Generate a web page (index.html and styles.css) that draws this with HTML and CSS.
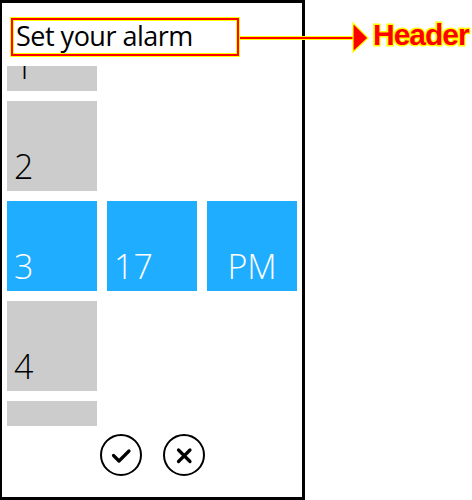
FILE: index.html
```html
<!DOCTYPE html>
<html>
<head>
<meta charset="utf-8">
<link rel="stylesheet" href="styles.css">
</head>
<body>
<div class="page">
  <div class="phone">
    <div class="header">Set your alarm</div>
    <div class="picker">
      <div class="col scroll-hours">
        <div class="tile gray"><span>1</span></div>
        <div class="tile gray"><span>2</span></div>
        <div class="tile blue"><span>3</span></div>
        <div class="tile gray"><span>4</span></div>
        <div class="tile gray"></div>
      </div>
      <div class="col scroll-selected">
        <div class="tile blue"><span>17</span></div>
      </div>
      <div class="col scroll-selected">
        <div class="tile blue center"><span>PM</span></div>
      </div>
    </div>
    <div class="actions">
      <svg class="btn" viewBox="0 0 42 42" width="42" height="42">
        <circle cx="21" cy="21" r="20" fill="none" stroke="#000" stroke-width="2"/>
        <path d="M13.5 21.5 L19 27 L29 17" fill="none" stroke="#000" stroke-width="3.2" stroke-linecap="round" stroke-linejoin="round"/>
      </svg>
      <svg class="btn" viewBox="0 0 42 42" width="42" height="42">
        <circle cx="21" cy="21" r="20" fill="none" stroke="#000" stroke-width="2"/>
        <path d="M15.5 16 L27 27.5 M27 16 L15.5 27.5" fill="none" stroke="#000" stroke-width="3.2" stroke-linecap="round"/>
      </svg>
    </div>
  </div>
  <svg class="arrow" width="140" height="40" viewBox="0 0 140 40">
    <line x1="0" y1="20" x2="118" y2="20" stroke="#ffff00" stroke-width="4"/>
    <line x1="0" y1="20" x2="118" y2="20" stroke="#ff0000" stroke-width="2"/>
    <polygon points="113,5 128,20 113,34" fill="#ff0000" stroke="#ffff00" stroke-width="1.2"/>
  </svg>
  <div class="label">Header</div>
</div>
</body>
</html>
```
FILE: styles.css
```css
html, body {
  margin: 0;
  padding: 0;
  background: #ffffff;
}
.page {
  position: relative;
  width: 472px;
  height: 500px;
}
.phone {
  box-sizing: border-box;
  width: 305px;
  height: 500px;
  border-style: solid;
  border-color: #000;
  border-width: 3px 3px 3px 2px;
  background: #fff;
  display: flex;
  flex-direction: column;
  font-family: "Open Sans", "Noto Sans", sans-serif;
}
.phone > * {
  flex-shrink: 0;
}
.header {
  box-sizing: border-box;
  margin: 15px 0 0 9px;
  width: 228px;
  height: 38px;
  border: 2px solid #ff0000;
  outline: 1px solid #ffff00;
  box-shadow: inset 0 0 0 1px #ffff00;
  padding: 0 0 0 3px;
  font-size: 27px;
  letter-spacing: -0.5px;
  line-height: 31px;
  color: #000;
  white-space: nowrap;
}
.picker {
  display: flex;
  gap: 10px;
  margin: 10px 0 0 5px;
  height: 360px;
  overflow: hidden;
}
.col {
  display: flex;
  flex-direction: column;
  gap: 10px;
  width: 90px;
}
.scroll-hours {
  margin-top: -65px;
}
.scroll-selected {
  margin-top: 135px;
}
.tile {
  box-sizing: border-box;
  flex-shrink: 0;
  width: 90px;
  height: 90px;
  display: flex;
  align-items: flex-end;
  padding: 0 0 8px 7px;
  font-size: 34px;
  font-weight: 300;
  line-height: 34px;
}
.tile span {
  display: block;
}
.tile.gray {
  background: #cccccc;
  color: #000;
}
.tile.blue {
  background: #1fadff;
  color: #fff;
}
.tile.center {
  justify-content: center;
  padding-left: 0;
}
.actions {
  display: flex;
  justify-content: center;
  gap: 21px;
  margin-top: 8px;
}
.btn {
  display: block;
}
.arrow {
  position: absolute;
  left: 240px;
  top: 18px;
}
.label {
  position: absolute;
  left: 373px;
  top: 16px;
  font-family: "Liberation Sans", Arial, sans-serif;
  font-weight: bold;
  font-size: 30px;
  letter-spacing: -1px;
  line-height: 38px;
  color: #ff0000;
  -webkit-text-stroke: 3px #ffff00;
  paint-order: stroke fill;
}
```
